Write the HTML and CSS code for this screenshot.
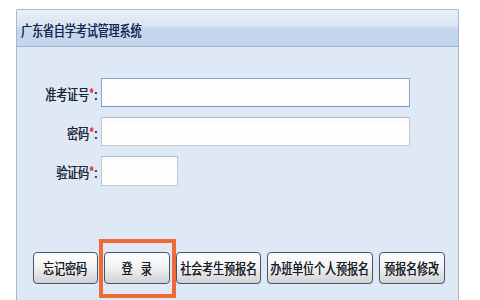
FILE: index.html
```
<!DOCTYPE html>
<html>
<head>
	<meta charset="utf-8">
	<title>广东省自学考试管理系统</title>
	<link rel="stylesheet" href="styles.css">
</head>
<body>
	<div id="panel">
		<div id="header">
			<span class="squeeze title">广东省自学考试管理系统</span>
		</div>

		<div id="form">
			<div class="row">
				<label class="label"><span class="squeeze">准考证号<em>*</em>:</span></label>
				<input class="field focus" type="text">
			</div>
			<div class="row">
				<label class="label"><span class="squeeze">密码<em>*</em>:</span></label>
				<input class="field" type="password">
			</div>
			<div class="row">
				<label class="label"><span class="squeeze">验证码<em>*</em>:</span></label>
				<input class="field code" type="text">
			</div>
		</div>

		<div id="buttons">
			<button class="btn w65"><span class="squeeze">忘记密码</span></button>
			<span class="mark">
				<button class="btn w66"><span class="squeeze wide">登 录</span></button>
			</span>
			<button class="btn w85"><span class="squeeze">社会考生预报名</span></button>
			<button class="btn w106"><span class="squeeze">办班单位个人预报名</span></button>
			<button class="btn w66"><span class="squeeze">预报名修改</span></button>
		</div>
	</div>
</body>
</html>
```

FILE: styles.css
```
body
{
	margin: 0;
	background: #fff;
	font-family: "Noto Sans CJK SC", "Liberation Sans", sans-serif;
	color: #1f2a3c;
}
#panel
{
	box-sizing: border-box;
	width: 443px;
	height: 291px;
	margin: 9px 0 0 16px;
	background: #dfe8f5;
	border: 1px solid #a9b8ca;
	border-bottom: 0;
	border-radius: 2px 2px 0 0;
}
#header
{
	height: 36px;
	display: flex;
	align-items: center;
	padding-left: 4px;
	background: linear-gradient(#e8eff9 0%, #d9e5f3 45%, #c6d8ee 50%, #c2d5ec 100%);
	border-bottom: 1px solid #9fb2c9;
}
.squeeze
{
	display: inline-block;
	font-size: 15px;
	line-height: 17px;
	white-space: nowrap;
	transform: scaleX(0.73);
	text-shadow: 0.3px 0 0 currentColor;
}
.title
{
	color: #16254d;
	transform-origin: left center;
	margin-top: 2px;
}
#form
{
	padding-top: 31px;
	display: flex;
	flex-direction: column;
	gap: 10px;
}
.row
{
	display: flex;
	align-items: center;
	gap: 4px;
}
.label
{
	width: 80px;
	text-align: right;
	color: #1c2536;
}
.label .squeeze
{
	transform-origin: right center;
}
.label em
{
	font-style: normal;
	color: #e0303a;
}
.field
{
	box-sizing: border-box;
	width: 309px;
	height: 29px;
	margin: 0;
	padding: 0 4px;
	background: linear-gradient(#fafbfd, #ffffff 40%, #fdfdfd);
	border: 1px solid #c4c7cc;
	border-top-color: #b9bcc2;
	outline: none;
}
.focus
{
	border-color: #86a5d4;
	border-bottom-color: #6f93c9;
}
.code
{
	width: 77px;
	height: 30px;
}
#buttons
{
	display: flex;
	gap: 6px;
	margin-top: 66px;
	padding-left: 16px;
}
.btn
{
	box-sizing: border-box;
	height: 32px;
	padding: 0;
	border: 1px solid #46556b;
	border-radius: 4px;
	background: linear-gradient(#fefefe 0%, #f3f3f3 45%, #e4e4e4 70%, #cfd1d4 100%);
	box-shadow: inset 0 1px 0 #fff;
	color: #161c28;
	font-family: "Noto Sans CJK SC", "Liberation Sans", sans-serif;
	cursor: pointer;
}
.btn .squeeze
{
	transform-origin: center;
	margin: 0 -20px;
}
.btn .wide
{
	letter-spacing: 4px;
	text-indent: 4px;
}
.w65 { width: 65px; }
.w66 { width: 66px; }
.w85 { width: 85px; }
.w106 { width: 106px; }
.mark
{
	position: relative;
	display: flex;
}
.mark::after
{
	content: "";
	position: absolute;
	left: -5px;
	right: -6px;
	top: -13px;
	bottom: -14px;
	border: 4px solid #ee6a38;
	pointer-events: none;
}
```
